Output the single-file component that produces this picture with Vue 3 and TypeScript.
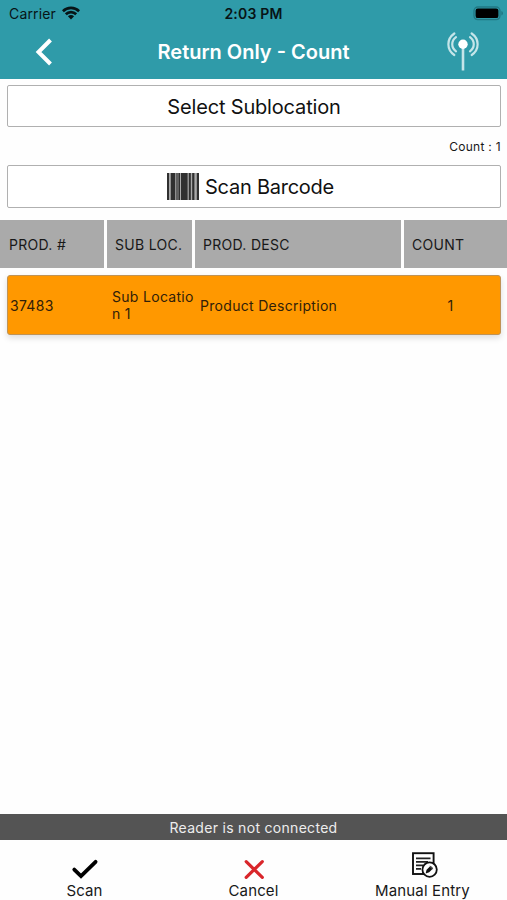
<script setup lang="ts">
interface CountRow {
  product: string
  sublocation: string
  description: string
  count: number
}

const columns: string[] = ['PROD. #', 'SUB LOC.', 'PROD. DESC', 'COUNT']
const rows: CountRow[] = [
  { product: '37483', sublocation: 'Sub Location 1', description: 'Product Description', count: 1 },
]
const bars: [number, number][] = [
  [0, 2], [3.8, 4.4], [9.4, 1.2], [11.4, 1.6], [14, 6.6], [21.8, 2], [25.2, 2.2], [29.8, 2.2],
]
</script>

<template>
  <main class="screen">
    <header class="top">
      <div class="status">
        <div class="carrier">
          <span>Carrier</span>
          <svg width="18" height="14" viewBox="0 0 18 14">
            <g fill="none" stroke="#071416" stroke-width="2.7">
              <path d="M.9 5.2A11.6 11.6 0 0 1 17.1 5.2" />
              <path d="M3.8 8.2A7.4 7.4 0 0 1 14.2 8.2" />
            </g>
            <path d="M5.9 10.3Q9 7.7 12.1 10.3L9 13.5Z" fill="#071416" />
          </svg>
        </div>
        <span class="time">2:03 PM</span>
        <svg class="battery" width="31" height="15" viewBox="0 0 31 15">
          <rect x="1" y="1" width="26" height="12.6" rx="3.8" fill="none" stroke="#217884" stroke-width="1.3" />
          <rect x="2.6" y="2.5" width="22.8" height="9.6" rx="2.2" fill="#000" />
          <path d="M28.3 5V9.6Q30 9 30 7.3T28.3 5Z" fill="#217884" />
        </svg>
      </div>
      <div class="nav">
        <svg class="back" width="18" height="28" viewBox="0 0 18 28">
          <path d="M15.5 2L3.5 14L15.5 26" fill="none" stroke="#fff" stroke-width="4" />
        </svg>
        <h1>Return Only - Count</h1>
        <svg class="antenna" width="32" height="40" viewBox="0 0 32 40">
          <path d="M16 13V38.5" stroke="#c5e5e9" stroke-width="2.6" />
          <circle cx="16" cy="12.3" r="4.7" fill="#fff" />
          <g fill="none" stroke="#c5e5e9" stroke-width="2.2" stroke-linecap="round">
            <path d="M7.3 1.5C-.6 7-.6 17.6 7.3 23" />
            <path d="M9 5.2C4 9 4 15.5 9 19.3" />
            <path d="M24.7 1.5C32.6 7 32.6 17.6 24.7 23" />
            <path d="M23 5.2C28 9 28 15.5 23 19.3" />
          </g>
        </svg>
      </div>
    </header>

    <section class="controls">
      <button class="field select-field">Select Sublocation</button>
      <p class="total">Count : 1</p>
      <button class="field scan-field">
        <svg width="32" height="27" viewBox="0 0 32 27">
          <rect width="32" height="27" fill="#aaa" />
          <rect v-for="bar in bars" :key="bar[0]" :x="bar[0]" y="0" :width="bar[1]" height="27" fill="#303030" />
        </svg>
        <span>Scan Barcode</span>
      </button>
    </section>

    <div class="table-head">
      <span v-for="column in columns" :key="column">{{ column }}</span>
    </div>
    <section class="list">
      <article v-for="row in rows" :key="row.product" class="card">
        <span class="product">{{ row.product }}</span>
        <span class="sub">{{ row.sublocation }}</span>
        <span class="desc">{{ row.description }}</span>
        <span class="quantity">{{ row.count }}</span>
      </article>
    </section>

    <div class="reader"><span>Reader is not connected</span></div>
    <footer class="actions">
      <button>
        <svg width="28" height="28" viewBox="0 0 28 28">
          <path d="M3.3 18.6L10 25L24.6 10.8" fill="none" stroke="#000" stroke-width="3.8" stroke-linecap="round" />
        </svg>
        <span>Scan</span>
      </button>
      <button>
        <svg width="28" height="28" viewBox="0 0 28 28">
          <path d="M6.2 10.6L22.3 26.4M22.3 10.6L6.2 26.4" stroke="#d9262b" stroke-width="3.2" stroke-linecap="round" />
        </svg>
        <span>Cancel</span>
      </button>
      <button>
        <svg class="entry-icon" width="30" height="28" viewBox="0 0 30 28">
          <rect x="5" y="2.2" width="20.6" height="20.8" fill="#fff" stroke="#111" stroke-width="1.9" />
          <path d="M8 7.3H22.5M8 10.8H20M8 14.3H15M8 17.8H13" stroke="#222" stroke-width="1.7" />
          <circle cx="21.6" cy="18.6" r="7.2" fill="#fff" stroke="#111" stroke-width="1.8" />
          <path d="M17.6 22.6L18.6 18.8L22.6 14.8L25.2 17.2L21.2 21.2Z" fill="#111" />
          <path d="M21.6 15L24.8 18.2" stroke="#888" stroke-width=".8" />
        </svg>
        <span>Manual Entry</span>
      </button>
    </footer>
  </main>
</template>

<style>
body {
  margin: 0;
  background: #fff;
}
</style>

<style scoped>
* {
  box-sizing: border-box;
}
.screen {
  width: 507px;
  height: 900px;
  display: flex;
  flex-direction: column;
  background: #fefefe;
  color: #181818;
  font-family: Inter, "Liberation Sans", sans-serif;
  white-space: nowrap;
  overflow: hidden;
}
svg {
  display: block;
  flex: none;
}
button {
  margin: 0;
  padding: 0;
  border: 0;
  background: none;
  color: inherit;
  font: inherit;
  letter-spacing: inherit;
}
.top {
  height: 79px;
  flex: none;
  background: #2f9ba9;
}
.status {
  height: 28px;
  display: grid;
  grid-template-columns: 1fr auto 1fr;
  align-items: center;
  padding: 0 6px;
  color: #071416;
  font-size: 14px;
  line-height: 16px;
}
.carrier {
  display: flex;
  align-items: center;
  gap: 6px;
  padding-left: 3px;
  letter-spacing: 0.15px;
}
.carrier svg {
  margin-top: -2px;
}
.time {
  font-weight: 600;
  letter-spacing: 0.2px;
}
.battery {
  justify-self: end;
  margin-right: -3px;
  margin-top: -1px;
}
.nav {
  height: 48px;
  display: grid;
  grid-template-columns: 1fr auto 1fr;
  align-items: center;
  padding: 0 28px;
}
.back {
  margin-left: 7px;
}
h1 {
  margin: 0;
  color: #fff;
  font-size: 20px;
  font-weight: 600;
}
.antenna {
  justify-self: end;
}
.controls {
  padding: 6px 6px 0 7px;
  height: 141px;
  flex: none;
}
.field {
  width: 100%;
  height: 42px;
  display: flex;
  align-items: center;
  justify-content: center;
  border: 1px solid #b0b0b0;
  border-radius: 2px;
  background: #fff;
  color: #111;
  font-size: 20px;
  letter-spacing: -0.17px;
}
.select-field {
  padding-top: 1px;
}
.scan-field {
  height: 43px;
  gap: 6px;
  padding-right: 7px;
  letter-spacing: -0.25px;
}
.total {
  height: 38px;
  margin: 0;
  line-height: 39px;
  font-size: 12px;
  letter-spacing: 0.3px;
  text-align: right;
}
.table-head {
  display: grid;
  grid-template-columns: 104px 85px 206px 1fr;
  column-gap: 3px;
  height: 48px;
  flex: none;
  font-size: 14px;
  letter-spacing: 0.3px;
}
.table-head span {
  display: flex;
  align-items: center;
  padding-left: 8px;
  background: #aaa;
}
.table-head span:first-child {
  padding-left: 9px;
}
.list {
  flex: 1;
  padding: 7px 6px 0 7px;
}
.card {
  height: 60px;
  display: grid;
  grid-template-columns: 103px 88px 202px 1fr;
  align-items: center;
  background: #ff9800;
  border: 1px solid #bf9356;
  border-radius: 3px;
  box-shadow: 0 3px 6px #0002;
  color: #302009;
  font-size: 14px;
  line-height: 17px;
  letter-spacing: 0.3px;
}
.product {
  padding-left: 2px;
}
.sub {
  width: 86px;
  padding-left: 1px;
  white-space: normal;
  word-break: break-all;
}
.desc {
  padding-left: 1px;
}
.quantity {
  text-align: center;
}
.reader {
  height: 26px;
  flex: none;
  display: grid;
  place-items: center;
  background: #545454;
  color: #ededed;
  font-size: 14px;
  letter-spacing: 0.3px;
}
.actions {
  height: 60px;
  flex: none;
  display: grid;
  grid-template-columns: repeat(3, 1fr);
  padding-top: 11px;
  font-size: 15px;
  letter-spacing: 0.15px;
}
.actions button {
  display: flex;
  flex-direction: column;
  align-items: center;
  gap: 2px;
  line-height: 20px;
}
</style>
